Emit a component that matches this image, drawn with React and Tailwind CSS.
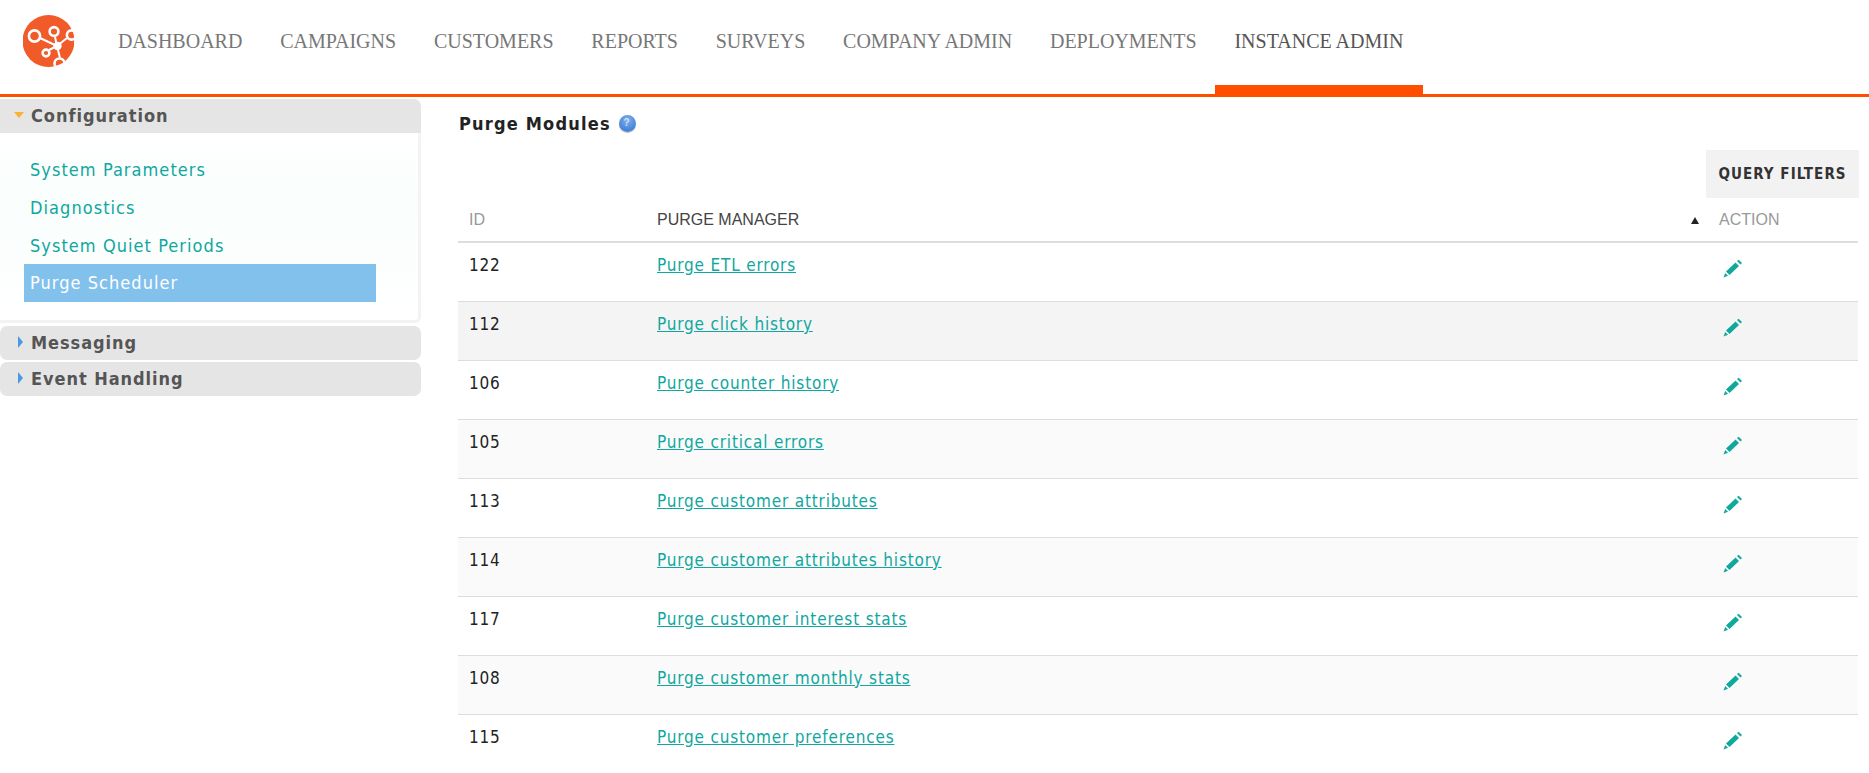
const NAV = [
  ["DASHBOARD", false],
  ["CAMPAIGNS", false],
  ["CUSTOMERS", false],
  ["REPORTS", false],
  ["SURVEYS", false],
  ["COMPANY ADMIN", false],
  ["DEPLOYMENTS", false],
  ["INSTANCE ADMIN", true],
];

const ROWS = [
  [122, "Purge ETL errors", "bg-white"],
  [112, "Purge click history", "bg-[#f4f4f4]"],
  [106, "Purge counter history", "bg-white"],
  [105, "Purge critical errors", "bg-[#fafafa]"],
  [113, "Purge customer attributes", "bg-white"],
  [114, "Purge customer attributes history", "bg-[#fafafa]"],
  [117, "Purge customer interest stats", "bg-white"],
  [108, "Purge customer monthly stats", "bg-[#fafafa]"],
  [115, "Purge customer preferences", "bg-white"],
];

const SANS = "font-['DejaVu_Sans_Condensed','DejaVu_Sans',sans-serif]";

function Logo() {
  return (
    <svg width="52" height="53" viewBox="23 15 52 53" className="shrink-0">
      <defs>
        <clipPath id="logoclip">
          <rect x="23" y="15" width="51" height="53" />
        </clipPath>
      </defs>
      <g clipPath="url(#logoclip)">
        <circle cx="48.5" cy="41" r="26" fill="#f15a29" />
        <g stroke="#fff" strokeWidth="2" fill="none">
          <path d="M40 38 L57 46 M55 37 L57 46 M49 50 L57 46 M57 46 L67 38 M57 46 L60 58" />
          <circle cx="34.5" cy="36" r="5.6" strokeWidth="2.6" />
          <circle cx="54" cy="31.5" r="4.4" strokeWidth="2.6" />
          <circle cx="46" cy="53" r="3.4" strokeWidth="2.6" />
          <circle cx="71.5" cy="35" r="4.6" strokeWidth="2.6" />
          <circle cx="59.5" cy="63.5" r="5" strokeWidth="2.6" />
        </g>
        <circle cx="57.5" cy="46" r="4.2" fill="#fff" />
      </g>
    </svg>
  );
}

function Pencil() {
  return (
    <svg width="20" height="19" viewBox="0 0 20 19">
      <path d="M3 12.5 L12.5 3.5 L16 7 L6.5 16 Z" fill="#0fa99b" />
      <path d="M14 2 L15.5 0.8 L19 4 L17.5 5.6 Z" fill="#0fa99b" />
      <path d="M0.5 18.5 L2.2 14 L5 16.8 Z" fill="#0fa99b" />
    </svg>
  );
}

function HelpIcon() {
  return (
    <span className="ml-[8px] inline-flex h-[17px] w-[17px] items-center justify-center rounded-full bg-[radial-gradient(circle_at_50%_30%,#7fb0ec,#2f6fd0)] font-['Liberation_Sans',sans-serif] text-[10px] font-bold leading-none text-[#cfe2fa] shadow-[0_1px_1px_#bbb]">
      ?
    </span>
  );
}

function SideHead({ label, open, className = "" }) {
  return (
    <div className={`flex h-[34px] w-[421px] items-center rounded-tr-[7px] bg-[#e5e5e5] pb-[2px] pl-[14px] ${className}`}>
      {open ? (
        <span className="mr-[7px] h-0 w-0 border-x-[5px] border-t-[6px] border-x-transparent border-t-[#f9b233]" />
      ) : (
        <span className="mr-[8px] ml-[4px] h-0 w-0 border-y-[6px] border-l-[5px] border-y-transparent border-l-[#4a9ae0]" />
      )}
      <span className={`${SANS} text-[18px] font-bold tracking-[0.95px] text-[#555]`}>{label}</span>
    </div>
  );
}

function SideLink({ label, active }) {
  return (
    <a
      className={`flex h-[37.7px] items-center pl-[6px] text-[18px] tracking-[1.05px] ${SANS} ${
        active ? "w-[352px] bg-[#82c1ec] text-white" : "text-[#0fa7a0]"
      }`}
    >
      {label}
    </a>
  );
}

export default function App() {
  return (
    <div className="h-[773px] w-[1869px] overflow-hidden bg-white">
      <header className="flex h-[97px] items-start border-b-[3px] border-[#ff4e00] pt-[15px] pl-[23px]">
        <Logo />
        <nav className="ml-[24px] flex h-[82px]">
          {NAV.map(([label, active]) => (
            <div
              key={label}
              className={`h-[70px] px-[18.9px] pt-[14px] font-['Liberation_Serif',serif] text-[20px] leading-[24px] ${
                active ? "text-[#555]" : "text-[#777]"
              }`}
            >
              {label}
            </div>
          ))}
        </nav>
      </header>
      <div className="absolute top-[85px] left-[1215px] h-[12px] w-[208px] bg-[#ff4e00]" />
      <main className="flex">
        <aside className="w-[421px] pt-[2px]">
          <SideHead label="Configuration" open />
          <div className="h-[190px] w-[421px] rounded-br-[6px] border-r-[3px] border-b-[3px] border-[#f3f3f3] bg-[linear-gradient(#ffffff,#f9fefd_35%,#ffffff)] pt-[18px] pl-[24px]">
            <SideLink label="System Parameters" />
            <SideLink label="Diagnostics" />
            <SideLink label="System Quiet Periods" />
            <SideLink label="Purge Scheduler" active />
          </div>
          <SideHead label="Messaging" className="mt-[3px] rounded-[7px]" />
          <SideHead label="Event Handling" className="mt-[2px] rounded-[7px]" />
        </aside>
        <section className="ml-[37px] w-[1400px]">
          <h1 className={`flex h-[53px] items-center ${SANS} pb-[3px] pt-[2px] pl-[1px] text-[18px] font-bold tracking-[1.2px] text-[#222]`}>
            Purge Modules
            <HelpIcon />
          </h1>
          <div className="flex justify-end">
            <button className={`-mr-px h-[48px] w-[153px] bg-[#f2f2f2] ${SANS} text-[15px] font-bold tracking-[1.05px] text-[#333]`}>
              QUERY FILTERS
            </button>
          </div>
          <table className="w-full table-fixed border-collapse">
            <colgroup>
              <col className="w-[188px]" />
              <col />
              <col className="w-[150px]" />
            </colgroup>
            <thead>
              <tr className="h-[44px] border-b-2 border-[#dddddd] font-['Liberation_Sans',sans-serif] text-[16px] font-normal">
                <th className="pl-[11px] text-left font-normal text-[#999]">ID</th>
                <th className="relative pl-[11px] text-left font-normal text-[#444]">
                  PURGE MANAGER
                  <span className="absolute top-[19px] right-[9px] h-0 w-0 border-x-[4px] border-b-[7px] border-x-transparent border-b-[#222]" />
                </th>
                <th className="pl-[11px] text-left font-normal text-[#999]">ACTION</th>
              </tr>
            </thead>
            <tbody>
              {ROWS.map(([id, name, bg]) => (
                <tr key={id} className={`h-[59px] border-b border-[#dddddd] align-top ${bg}`}>
                  <td className={`pt-[10px] pl-[11px] ${SANS} text-[17px] tracking-[0.82px] text-[#222]`}>{id}</td>
                  <td className={`pt-[10px] pl-[11px] ${SANS} text-[17px] tracking-[0.82px]`}>
                    <a className="text-[#0fa7a0] underline">{name}</a>
                  </td>
                  <td className="pt-[16px] pl-[15px]">
                    <Pencil />
                  </td>
                </tr>
              ))}
            </tbody>
          </table>
        </section>
      </main>
    </div>
  );
}
